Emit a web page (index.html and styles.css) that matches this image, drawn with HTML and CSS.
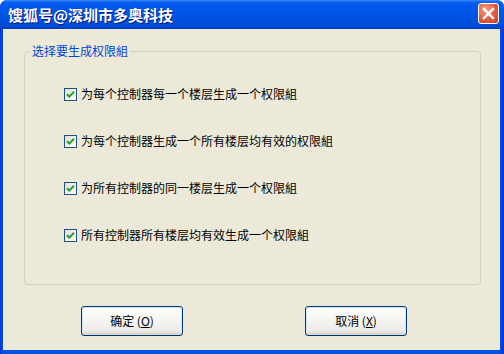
FILE: index.html
```html
<!DOCTYPE html>
<html>
<head>
<meta charset="utf-8">
<link rel="stylesheet" href="styles.css">
</head>
<body>
<div class="window">
  <div class="titlebar">
    <span class="title">馊狐号@深圳市多奥科技</span>
    <span class="close">
      <svg width="21" height="21" viewBox="0 0 21 21">
        <path d="M6 6 L15 15 M15 6 L6 15" stroke="#fff" stroke-width="2.4" stroke-linecap="square"/>
      </svg>
    </span>
  </div>
  <div class="client">
    <fieldset class="group">
      <legend class="legend">选择要生成权限組</legend>
      <div class="rows">
        <label class="row"><span class="check"><svg width="13" height="13" viewBox="0 0 13 13"><path d="M3 6.2 L5.3 8.6 L10 3.8" fill="none" stroke="#21a121" stroke-width="2"/></svg></span>为每个控制器每一个楼层生成一个权限組</label>
        <label class="row"><span class="check"><svg width="13" height="13" viewBox="0 0 13 13"><path d="M3 6.2 L5.3 8.6 L10 3.8" fill="none" stroke="#21a121" stroke-width="2"/></svg></span>为每个控制器生成一个所有楼层均有效的权限組</label>
        <label class="row"><span class="check"><svg width="13" height="13" viewBox="0 0 13 13"><path d="M3 6.2 L5.3 8.6 L10 3.8" fill="none" stroke="#21a121" stroke-width="2"/></svg></span>为所有控制器的同一楼层生成一个权限組</label>
        <label class="row"><span class="check"><svg width="13" height="13" viewBox="0 0 13 13"><path d="M3 6.2 L5.3 8.6 L10 3.8" fill="none" stroke="#21a121" stroke-width="2"/></svg></span>所有控制器所有楼层均有效生成一个权限組</label>
      </div>
    </fieldset>
    <div class="buttons">
      <button class="btn">确定 (<u>O</u>)</button>
      <button class="btn">取消 (<u>X</u>)</button>
    </div>
  </div>
</div>
</body>
</html>
```
FILE: styles.css
```css
html, body {
  margin: 0;
  padding: 0;
  background: #ffffff;
}
.window {
  width: 504px;
  height: 354px;
  box-sizing: border-box;
  display: flex;
  flex-direction: column;
  background: linear-gradient(to right, #0831d9 0, #0054e3 3px, #0054e3 499px, #0831d9 504px);
  border-radius: 7px 7px 0 0;
  font-family: "Noto Sans CJK SC", "Noto Sans", sans-serif;
  font-size: 12px;
}
.titlebar {
  height: 29px;
  flex: none;
  display: flex;
  align-items: center;
  justify-content: space-between;
  padding: 0 5px 0 8px;
  border-radius: 7px 7px 0 0;
  background: linear-gradient(to bottom, #3d8cf7 0, #0a62f0 2px, #0058ee 5px, #0055e5 14px, #0050dd 22px, #0046cf 27px, #003fbe 29px);
}
.title {
  color: #ffffff;
  font-weight: bold;
  font-size: 15px;
  text-shadow: 1px 1px 0 #0a1a7a;
  line-height: 18px;
  margin-top: 1px;
}
.close {
  width: 21px;
  height: 21px;
  box-sizing: border-box;
  border: 1px solid #ffffff;
  border-radius: 3px;
  background: radial-gradient(circle at 35% 30%, #f2a085 0, #e35a3d 55%, #c53c20 100%);
  display: flex;
  align-items: center;
  justify-content: center;
  margin-top: -2px;
}
.close svg {
  display: block;
  margin: -1px;
}
.client {
  flex: 1;
  margin: 0 4px 4px 3px;
  background: #ece9d8;
  display: flex;
  flex-direction: column;
}
.group {
  margin: 15px 19px 0 21px;
  padding: 0;
  height: 241px;
  box-sizing: border-box;
  border: 1px solid #d0d0bf;
  border-radius: 4px;
  min-width: 0;
}
.legend {
  margin-left: 5px;
  padding: 0 2px;
  color: #0046d5;
  line-height: 14px;
  font-size: 12px;
}
.rows {
  display: flex;
  flex-direction: column;
  gap: 31px;
  padding: 28px 0 0 39px;
}
.row {
  display: flex;
  align-items: center;
  gap: 4px;
  height: 16px;
  color: #000000;
  line-height: 16px;
}
.check {
  width: 13px;
  height: 13px;
  box-sizing: border-box;
  border: 1px solid #1c5180;
  background: linear-gradient(135deg, #dcdcd7 0, #f5f5f2 60%, #ffffff 100%);
  display: flex;
  align-items: center;
  justify-content: center;
  flex: none;
}
.check svg {
  display: block;
  margin: -1px;
}
.buttons {
  display: flex;
  gap: 122px;
  padding: 21px 0 0 78px;
}
.btn {
  width: 102px;
  height: 30px;
  box-sizing: border-box;
  border: 1px solid #003c74;
  border-radius: 3px;
  background: linear-gradient(to bottom, #ffffff 0, #f6f6f3 40%, #ecebe6 85%, #d6d0c5 100%);
  box-shadow: inset 0 -1px 0 #d8d2c6, inset 0 0 0 1px #cee7ff;
  font-family: "Noto Sans CJK SC", "Noto Sans", sans-serif;
  font-size: 12px;
  color: #000000;
  padding: 0;
  line-height: 16px;
}
.btn u {
  text-decoration: underline;
}
```
